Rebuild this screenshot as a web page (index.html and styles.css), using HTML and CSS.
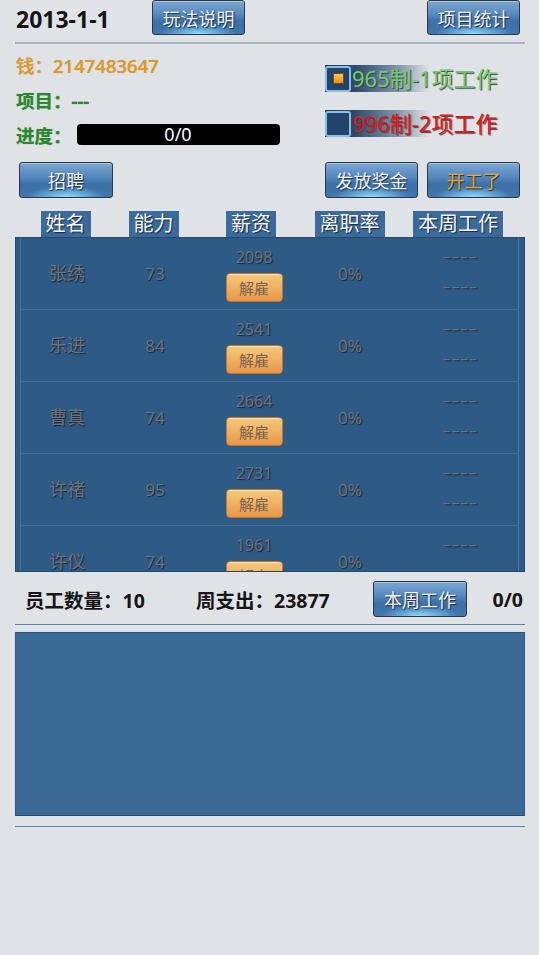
FILE: index.html
```html
<!DOCTYPE html>
<html lang="zh">
<head>
  <meta charset="UTF-8" />
  <title>工作室经营</title>
  <link rel="stylesheet" href="styles.css">
</head>
<body>
  <div class="page">

    <div class="topbar">
      <span class="date">2013-1-1</span>
      <button class="btn">玩法说明</button>
      <button class="btn push-right">项目统计</button>
    </div>
    <hr class="rule rule-top" />

    <div class="info">
      <div class="stats">
        <div class="line money">钱：2147483647</div>
        <div class="line green">项目：---</div>
        <div class="line green">进度：<div class="progress">0/0</div></div>
      </div>
      <div class="modes">
        <div class="mode mode-965"><span class="check on"></span><span class="mode-text">965制-1项工作</span></div>
        <div class="mode mode-996"><span class="check"></span><span class="mode-text">996制-2项工作</span></div>
      </div>
    </div>

    <div class="actions">
      <button class="btn btn-hire">招聘</button>
      <button class="btn push-right">发放奖金</button>
      <button class="btn btn-start">开工了</button>
    </div>

    <div class="colhead">
      <span class="tag">姓名</span>
      <span class="tag">能力</span>
      <span class="tag">薪资</span>
      <span class="tag">离职率</span>
      <span class="tag tag-work">本周工作</span>
    </div>

    <div class="roster">
      <div class="rows" id="rows"></div>
    </div>

    <div class="summary">
      <span class="count">员工数量：10</span>
      <span class="spend">周支出：23877</span>
      <button class="btn">本周工作</button>
      <span class="ratio">0/0</span>
    </div>
    <hr class="rule" />

    <div class="log"></div>
    <hr class="rule rule-last" />

  </div>

  <script>
    const staff = [
      { name: "张绣", power: 73, pay: 2098, quit: "0%" },
      { name: "乐进", power: 84, pay: 2541, quit: "0%" },
      { name: "曹真", power: 74, pay: 2664, quit: "0%" },
      { name: "许褚", power: 95, pay: 2731, quit: "0%" },
      { name: "许仪", power: 74, pay: 1961, quit: "0%" }
    ];

    const rows = document.getElementById("rows");
    staff.forEach(p => {
      const row = document.createElement("div");
      row.className = "row";
      row.innerHTML = `
        <span class="cell cell-name">${p.name}</span>
        <span class="cell">${p.power}</span>
        <span class="cell cell-pay"><span>${p.pay}</span><button class="fire">解雇</button></span>
        <span class="cell">${p.quit}</span>
        <span class="cell cell-work"><span>----</span><span>----</span></span>`;
      rows.appendChild(row);
    });
  </script>
</body>
</html>
```

FILE: styles.css
```css
body {
  margin: 0;
  background: #dfe3e5;
  font-family: "Noto Sans", "Noto Sans CJK SC", sans-serif;
  color: #111;
}
.page {
  width: 510px;
  padding: 0 14px 0 15px;
}
.rule {
  border: 0;
  margin: 0;
  height: 1px;
  background: #6b80a6;
}
.rule-top {
  height: 2px;
  background: #a9b2c2;
}
.rule-last {
  margin-top: 10px;
}

/* buttons */
.btn {
  width: 93px;
  height: 36px;
  padding: 0;
  font-family: inherit;
  font-size: 18px;
  color: #f0f3f6;
  text-shadow: 1px 1px 1px #1d2d40;
  border: 1px solid #2a3846;
  border-radius: 3px;
  background:
    radial-gradient(ellipse 42% 32% at 50% 100%, rgba(140, 220, 255, 1), rgba(130, 215, 255, 0)),
    linear-gradient(to bottom, #7ca7d2 0%, #5689be 40%, #3c70a6 62%, #3f77af 100%);
  box-shadow: inset 0 1px 0 rgba(255, 255, 255, 0.35);
  cursor: pointer;
}
.push-right {
  margin-left: auto;
}

/* top bar */
.topbar {
  display: flex;
  align-items: flex-start;
  height: 42px;
}
.topbar .btn {
  height: 35px;
}
.date {
  width: 136px;
  padding: 4px 0 0 1px;
  font-size: 23px;
  font-weight: bold;
  line-height: 30px;
  color: #151515;
}
.topbar .push-right {
  margin-right: 5px;
}

/* money / project / mode switches */
.info {
  display: grid;
  grid-template-columns: 310px 1fr;
  padding-top: 3px;
}
.line {
  display: flex;
  align-items: center;
  height: 35px;
  padding-left: 1px;
  font-size: 18.5px;
  font-weight: 500;
  text-shadow: 0 0 1px rgba(0, 0, 0, 0.35);
}
.money {
  color: #e89a18;
}
.green {
  color: #268a28;
  font-weight: bold;
}
.progress {
  width: 203px;
  height: 21px;
  margin-left: 5px;
  background: #000;
  border-radius: 4px;
  color: #fff;
  font-size: 18px;
  font-weight: normal;
  line-height: 21px;
  text-align: center;
  text-shadow: none;
}
.modes {
  display: flex;
  flex-direction: column;
  gap: 18px;
  padding-top: 18px;
}
.mode {
  display: flex;
  align-items: center;
  height: 27px;
  background: linear-gradient(to right, #1f3b5b 0, #2d4b6b 30px, #7f95ab 72px, rgba(223, 227, 229, 0) 105px) no-repeat;
  background-size: 105px 100%;
}
.check {
  box-sizing: border-box;
  width: 26px;
  height: 26px;
  display: flex;
  align-items: center;
  justify-content: center;
  border: 2px solid #86bfe6;
  border-radius: 3px;
  background: #22456c;
}
.check.on::after {
  content: "";
  width: 9px;
  height: 9px;
  border: 1px solid #7a4a10;
  background: linear-gradient(#f9c84a, #e7921c);
}
.mode-text {
  margin-left: 1px;
  font-size: 22px;
  line-height: 27px;
  text-shadow: 1px 1px 1px #3a4450;
}
.mode-965 .mode-text {
  color: #72cc6e;
}
.mode-996 .mode-text {
  color: #e51414;
}

/* action row */
.actions {
  display: flex;
  gap: 9px;
  margin-top: 10px;
  padding-right: 5px;
}
.btn-hire {
  width: 94px;
  margin-left: 4px;
}
.btn-start {
  color: #f5a41a;
}

/* roster */
.colhead,
.row {
  display: grid;
}
.colhead {
  grid-template-columns: 101px 75px 120px 77px 130px;
  justify-items: center;
  margin-top: 13px;
}
.tag {
  padding: 0 5px;
  background: #3b6b9b;
  color: #f4f6f8;
  font-size: 20px;
  line-height: 26px;
  text-shadow: 1px 1px 1px #16283a;
}
.tag-work {
  margin-left: 10px;
}
.roster {
  height: 333px;
  overflow: hidden;
  border: 1px solid #27496e;
  padding: 0 5px 0 4px;
  background: #2e5a86;
}
.rows {
  border-left: 1px solid #3f6e9b;
  border-right: 1px solid #4877a3;
  min-height: 100%;
}
.row {
  grid-template-columns: 92px 84px 114px 78px 1fr;
  height: 71px;
  border-bottom: 1px solid #3e6c98;
}
.cell {
  display: flex;
  flex-direction: column;
  align-items: center;
  justify-content: center;
  color: #6e7378;
  font-size: 17px;
  text-shadow: 1px 1px 1px #17283a;
}
.cell-name {
  font-size: 18px;
  padding-bottom: 4px;
}
.cell-pay {
  justify-content: flex-start;
  padding-top: 9px;
  font-size: 16px;
  line-height: 20px;
}
.cell-work {
  padding: 0 0 5px 13px;
  font-size: 15px;
  line-height: 30px;
}
.cell-work span {
  display: inline-block;
  transform: scaleX(1.8);
}
.fire {
  width: 57px;
  height: 29px;
  margin-top: 6px;
  padding: 0;
  font-family: inherit;
  font-size: 15px;
  color: #7a6350;
  border: 1px solid #b9793a;
  border-radius: 4px;
  background: linear-gradient(#f4c97a, #e8984a);
  box-shadow: inset 0 1px 0 rgba(255, 255, 255, 0.45);
  text-shadow: none;
}

/* summary + log */
.summary {
  display: flex;
  align-items: center;
  height: 36px;
  margin: 9px 0 7px;
  font-size: 19.5px;
  font-weight: bold;
  color: #161616;
}
.count {
  box-sizing: border-box;
  width: 181px;
  padding-left: 10px;
}
.spend {
  width: 177px;
}
.summary .btn {
  width: 94px;
  font-weight: normal;
}
.ratio {
  margin-left: auto;
  margin-right: 2px;
}
.log {
  height: 182px;
  margin-top: 7px;
  border: 1px solid #2d5680;
  border-bottom-color: #244a70;
  background: #3b6a96;
}
```
